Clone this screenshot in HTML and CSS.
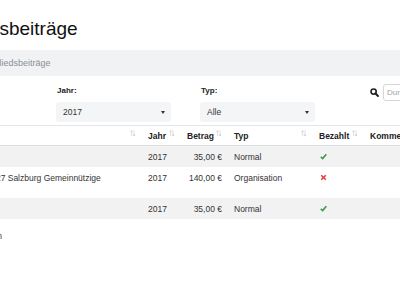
FILE: index.html
```html
<!DOCTYPE html>
<html lang="de">
<head>
  <meta charset="UTF-8">
  <title>Mitgliedsbeiträge</title>
  <link rel="stylesheet" href="styles.css">
</head>
<body>
  <div class="page">
    <h1>Mitgliedsbeiträge</h1>
    <div class="crumbs"><span class="crumb-link">Dashboard</span> / Mitgliedsbeiträge</div>

    <div class="filters">
      <div class="filter">
        <label>Jahr:</label>
        <div class="select">2017<span class="caret"></span></div>
      </div>
      <div class="filter">
        <label>Typ:</label>
        <div class="select">Alle<span class="caret"></span></div>
      </div>
      <div class="search">
        <svg width="9" height="9" viewBox="0 0 9 9"><circle cx="3.6" cy="3.6" r="2.6" fill="none" stroke="#222" stroke-width="1.6"/><path d="M5.5 5.5 L8 8" stroke="#222" stroke-width="1.9" stroke-linecap="round"/></svg>
        <input type="text" placeholder="Durchsuchen">
      </div>
    </div>

    <table class="list">
      <colgroup>
        <col style="width:228px">
        <col style="width:39px">
        <col style="width:47px">
        <col style="width:85px">
        <col style="width:51px">
        <col style="width:110px">
      </colgroup>
      <thead>
        <tr>
          <th><div class="th">Name<span class="sort">↑↓</span></div></th>
          <th><div class="th">Jahr<span class="sort">↑↓</span></div></th>
          <th><div class="th">Betrag<span class="sort">↑↓</span></div></th>
          <th><div class="th">Typ<span class="sort">↑↓</span></div></th>
          <th><div class="th">Bezahlt<span class="sort">↑↓</span></div></th>
          <th><div class="th">Kommentar<span class="sort">↑↓</span></div></th>
        </tr>
      </thead>
      <tbody>
        <tr>
          <td>Max Mustermann</td>
          <td>2017</td>
          <td class="num">35,00 €</td>
          <td>Normal</td>
          <td><svg class="mark" width="7" height="7" viewBox="0 0 7 7"><path d="M0.8 3.8 L2.7 5.6 L6.3 1.2" fill="none" stroke="#3b9c45" stroke-width="1.6"/></svg></td>
          <td></td>
        </tr>
        <tr>
          <td>ATSV Turnverein 1927 Salzburg Gemeinnützige Vereinigung</td>
          <td>2017</td>
          <td class="num">140,00 €</td>
          <td>Organisation</td>
          <td><svg class="mark" width="7" height="7" viewBox="0 0 7 7"><path d="M1.2 1.2 L5.8 5.8 M5.8 1.2 L1.2 5.8" fill="none" stroke="#e2403b" stroke-width="1.6"/></svg></td>
          <td></td>
        </tr>
        <tr>
          <td>Eva Muster</td>
          <td>2017</td>
          <td class="num">35,00 €</td>
          <td>Normal</td>
          <td><svg class="mark" width="7" height="7" viewBox="0 0 7 7"><path d="M0.8 3.8 L2.7 5.6 L6.3 1.2" fill="none" stroke="#3b9c45" stroke-width="1.6"/></svg></td>
          <td></td>
        </tr>
      </tbody>
    </table>

    <div class="info">1 bis 3 von 3 Einträgen</div>
  </div>
</body>
</html>
```

FILE: styles.css
```css
body {
  margin: 0;
  overflow: hidden;
  background: #fff;
  color: #222;
  font-family: "Liberation Sans", Arial, sans-serif;
}

.page {
  margin-left: -88px;
  width: 620px;
}

h1 {
  margin: 0 0 10px;
  padding: 17px 0 0 22px;
  font-size: 19px;
  line-height: 23px;
  font-weight: normal;
  color: #111;
}

.crumbs {
  height: 26px;
  line-height: 26px;
  padding: 0 12px 0 19px;
  background: #f1f2f4;
  font-size: 9px;
  color: #8c9096;
}

.crumb-link {
  color: #5a8fd0;
}

.filters {
  display: flex;
  padding-left: 144px;
  margin-top: 9px;
}

.filter {
  width: 115px;
  margin-right: 29px;
}

.filter label {
  display: block;
  font-size: 8px;
  font-weight: bold;
  line-height: 12px;
  margin-bottom: 5px;
  padding-left: 1px;
}

.select {
  display: flex;
  align-items: center;
  justify-content: space-between;
  height: 20px;
  padding: 0 6px 0 7px;
  background: #f3f5f7;
  border-radius: 3px;
  font-size: 8.5px;
  color: #333;
}

.caret {
  width: 0;
  height: 0;
  border-left: 2.5px solid transparent;
  border-right: 2.5px solid transparent;
  border-top: 3px solid #333;
}

.search {
  display: flex;
  align-items: flex-start;
  padding-left: 26px;
}

.search svg {
  margin-top: 3px;
  margin-right: 4px;
}

.search input {
  width: 110px;
  height: 17px;
  box-sizing: border-box;
  margin-top: -1px;
  border: 1px solid #d3d7db;
  border-radius: 3px;
  padding: 0 3px;
  font-family: inherit;
  font-size: 8px;
}

.search input::placeholder {
  color: #a0a4a8;
}

.list {
  margin-top: 3px;
  border-collapse: collapse;
  table-layout: fixed;
  font-size: 8.5px;
  color: #333;
}

.list th {
  padding: 5px 3px 4px 8px;
  line-height: 10px;
  text-align: left;
  font-weight: bold;
  color: #222;
  border-top: 1px solid #e3e5e8;
  border-bottom: 1px solid #dcdfe2;
}

.th {
  display: flex;
  justify-content: space-between;
}

.sort {
  font-size: 10px;
  font-weight: normal;
  letter-spacing: -2.5px;
  color: #b6babe;
  margin-top: -3px;
  padding-right: 3px;
}

.list td {
  padding: 5.5px 4px 5.5px 8px;
  line-height: 10px;
  vertical-align: top;
}

.list tbody tr:nth-child(odd) {
  background: #f2f2f3;
}

.list td.num {
  text-align: right;
}

.mark {
  display: block;
  margin: 1px 0 0 1px;
}

.info {
  margin-top: 12px;
  padding-left: 3px;
  font-size: 8.5px;
  line-height: 10px;
  color: #333;
}
```
